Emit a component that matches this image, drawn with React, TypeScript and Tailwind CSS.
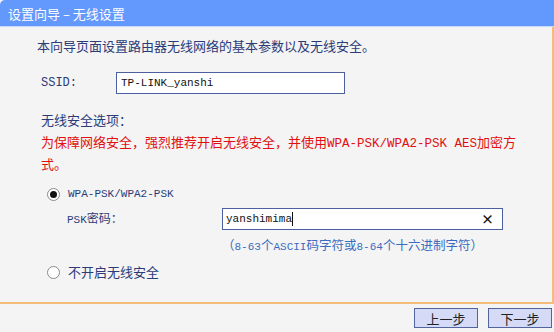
import React from "react";

const cjk = { fontFamily: '"Noto Sans CJK SC", "Noto Sans", sans-serif' };
const mono = { fontFamily: '"Liberation Mono", "Noto Sans CJK SC", monospace' };

function Radio({ checked }: { checked?: boolean }) {
  return (
    <span className="w-[13px] h-[13px] rounded-full border border-[#8a8a8a] bg-white flex items-center justify-center shrink-0">
      {checked && <span className="w-[7px] h-[7px] rounded-full bg-[#111]" />}
    </span>
  );
}

export default function App() {
  return (
    <div className="w-[554px] h-[332px] bg-[#f4f4f4] flex flex-col text-[#2c3b78] text-[13px] overflow-hidden" style={cjk}>
      <div className="h-[27px] shrink-0 bg-[#6398fc] border-b border-[#c9d9fb] rounded-tl-[5px] flex items-center pl-[8px] text-white text-[13px] leading-none">
        设置向导 – 无线设置
      </div>
      <div className="h-[277px] shrink-0 border-r-2 border-b-2 border-[#f5bd79] pl-[37px] pt-[9px] flex flex-col">
        <div className="leading-[20px]">本向导页面设置路由器无线网络的基本参数以及无线安全。</div>
        <div className="mt-[16px] ml-[4px] flex items-center h-[22px]">
          <span className="w-[75px] text-[12px]" style={mono}>SSID:</span>
          <div className="w-[229px] h-[22px] border border-[#4c5f9e] bg-white flex items-center pl-[4px] text-[11px] text-[#111]" style={mono}>
            TP-LINK_yanshi
          </div>
        </div>
        <div className="mt-[16px] ml-[4px] leading-[20px]">无线安全选项：</div>
        <div className="mt-[2px] ml-[4px] leading-[20px] text-[#e01010]">
          为保障网络安全，强烈推荐开启无线安全，并使用<span style={mono} className="text-[12.5px]">WPA-PSK/WPA2-PSK AES</span>加密方
          <br />
          式。
        </div>
        <div className="mt-[10px] ml-[10px] flex items-center h-[20px]">
          <Radio checked />
          <span className="ml-[8px] text-[11px]" style={mono}>WPA-PSK/WPA2-PSK</span>
        </div>
        <div className="mt-[4px] ml-[30px] flex items-center h-[22px]">
          <span className="w-[155px] text-[12px]"><span style={mono} className="text-[11px]">PSK</span>密码：</span>
          <div className="w-[281px] h-[22px] border border-[#4c5f9e] bg-white flex items-center pl-[3px] pr-[8px] text-[11px] text-[#111]" style={mono}>
            <span>yanshimima</span>
            <span className="w-px h-[14px] bg-[#111]" />
            <span className="ml-auto text-[13px] font-bold" style={cjk}>×</span>
          </div>
        </div>
        <div className="mt-[5px] ml-[185px] leading-[20px] text-[12.5px] text-[#3a6dc0]">
          （<span style={mono} className="text-[11px]">8-63</span>个<span style={mono} className="text-[11px]">ASCII</span>码字符或<span style={mono} className="text-[11px]">8-64</span>个十六进制字符）
        </div>
        <div className="mt-[5px] ml-[10px] flex items-center h-[20px]">
          <Radio />
          <span className="ml-[8px]">不开启无线安全</span>
        </div>
      </div>
      <div className="flex justify-end gap-[10px] pt-[4px] pr-[2px]">
        <button className="w-[64px] h-[20px] border border-[#52649f] bg-[#d5dbf6] text-[13px] text-[#222] leading-none flex items-center justify-center">上一步</button>
        <button className="w-[64px] h-[20px] border border-[#52649f] bg-[#d5dbf6] text-[13px] text-[#222] leading-none flex items-center justify-center">下一步</button>
      </div>
    </div>
  );
}
